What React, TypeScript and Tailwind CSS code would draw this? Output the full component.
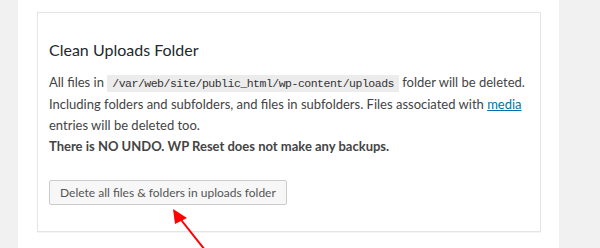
export default function App() {
  return (
    <div className="flex h-[248px] w-[600px] overflow-hidden bg-white font-['Lato',sans-serif] text-[13px] text-[#444]">
      <div className="w-[18px] shrink-0 bg-[#f1f1f1]" />
      <div className="relative w-[541px] shrink-0 pl-[19px] pt-[12px]">
        <div className="w-[504px] border border-[#e5e5e5] px-[11px] pb-[26px] pt-[26px] shadow-[0_1px_1px_rgba(0,0,0,0.04)]">
          <h2 className="text-[16px] leading-[22px] text-[#23282d]">Clean Uploads Folder</h2>
          <p className="mt-[11px] leading-[21px]">
            All files in{" "}
            <code className="bg-[#ececec] px-[5px] py-[2px] font-['Liberation_Mono',monospace] text-[11.5px] tracking-[-0.5px] text-[#333]">
              /var/web/site/public_html/wp-content/uploads
            </code>{" "}
            folder will be deleted. Including folders and subfolders, and files in subfolders. Files associated with{" "}
            <a href="#" className="text-[#0073aa] underline">
              media
            </a>{" "}
            entries will be deleted too.
            <br />
            <b className="font-bold">There is NO UNDO. WP Reset does not make any backups.</b>
          </p>
          <button className="mt-[23px] h-[25px] rounded-[2px] border border-[#ccc] bg-[#f7f7f7] px-[10px] text-[12px] leading-[23px] text-[#555]">
            Delete all files &amp; folders in uploads folder
          </button>
        </div>
        <svg className="absolute left-[137px] top-[197px]" width="60" height="51" viewBox="155 197 60 51">
          <line x1="178" y1="216" x2="205" y2="250" stroke="#ff0000" strokeWidth="2" />
          <polygon points="173,209 175,224 187,218" fill="#ff0000" />
        </svg>
      </div>
      <div className="flex-1 bg-[#f1f1f1]" />
    </div>
  );
}
